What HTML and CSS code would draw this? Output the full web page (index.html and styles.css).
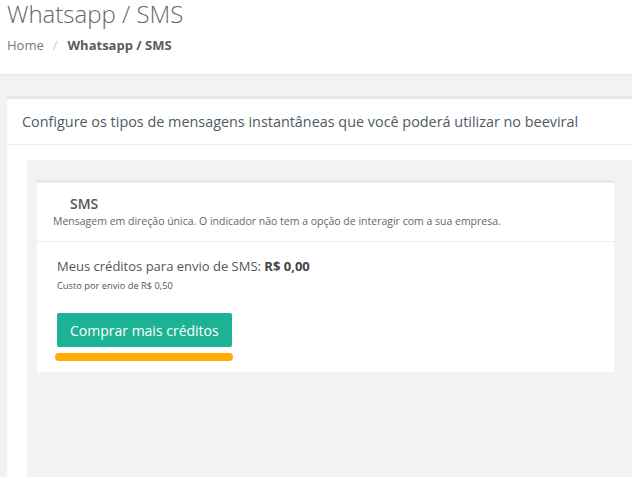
FILE: index.html
```html
<!DOCTYPE html>
<html lang="pt-BR">
<head>
<meta charset="utf-8">
<title>Whatsapp / SMS</title>
<link rel="stylesheet" href="styles.css">
</head>
<body>
<header class="page-head">
  <h1 class="page-title">Whatsapp / SMS</h1>
  <ul class="breadcrumb">
    <li class="crumb">Home</li>
    <li class="crumb-sep">/</li>
    <li class="crumb crumb-active">Whatsapp / SMS</li>
  </ul>
</header>
<main class="content">
  <section class="portlet">
    <div class="portlet-title">Configure os tipos de mensagens instantâneas que você poderá utilizar no beeviral</div>
    <div class="portlet-body">
      <div class="well">
        <div class="card">
          <div class="card-head">
            <h3 class="card-title">SMS</h3>
            <p class="card-desc">Mensagem em direção única. O indicador não tem a opção de interagir com a sua empresa.</p>
          </div>
          <div class="card-body">
            <p class="credits">Meus créditos para envio de SMS: <strong>R$ 0,00</strong></p>
            <p class="cost">Custo por envio de R$ 0,50</p>
            <button class="btn-buy" type="button">Comprar mais créditos</button>
            <div class="highlight"></div>
          </div>
        </div>
      </div>
    </div>
  </section>
</main>
</body>
</html>
```
FILE: styles.css
```css
html, body {
  margin: 0;
  padding: 0;
}
body {
  background: #f2f2f2;
  font-family: "Open Sans", "Noto Sans", sans-serif;
  overflow: hidden;
  width: 632px;
  height: 477px;
}
.page-head {
  background: #fff;
  height: 74px;
  border-bottom: 1px solid #e7e7e7;
  padding-left: 7px;
  overflow: hidden;
}
.page-title {
  margin: 2px 0 0;
  font-size: 24px;
  line-height: 24px;
  font-weight: 300;
  color: #666;
}
.breadcrumb {
  list-style: none;
  margin: 10px 0 0;
  padding: 0;
  display: flex;
  font-size: 13px;
  line-height: 18px;
  color: #777;
}
.crumb-sep {
  color: #ccc;
  margin: 0 10px 0 9px;
}
.crumb-active {
  font-weight: 700;
  color: #5b5b5b;
}
.content {
  padding: 21px 0 0 7px;
}
.portlet {
  background: #fff;
  border-top: 3px solid #e6e9ec;
  width: 720px;
  height: 400px;
}
.portlet-title {
  height: 45px;
  line-height: 45px;
  padding-left: 15px;
  font-size: 14.4px;
  color: #4e5a65;
  border-bottom: 1px solid #eee;
}
.portlet-body {
  padding: 15px 0 0 20px;
}
.well {
  background: #f2f2f2;
  padding: 20px 0 0 10px;
  height: 340px;
}
.card {
  width: 577px;
  background: #fff;
  border-top: 3px solid #e6e9ec;
}
.card-head {
  padding: 11px 0 12px 16px;
  border-bottom: 1px solid #eee;
}
.card-title {
  margin: 0 0 0 17px;
  font-size: 14px;
  line-height: 20px;
  font-weight: 600;
  color: #555;
}
.card-desc {
  margin: 0;
  font-size: 10.5px;
  line-height: 15px;
  color: #666;
}
.card-body {
  padding: 15px 0 11px 20px;
}
.credits {
  margin: 0;
  font-size: 13px;
  line-height: 18px;
  color: #555;
}
.credits strong {
  color: #444;
  font-weight: 700;
}
.cost {
  margin: 4px 0 0;
  font-size: 9.3px;
  line-height: 13px;
  color: #555;
}
.btn-buy {
  margin-top: 21px;
  height: 34px;
  padding: 0 13px;
  border: 0;
  border-radius: 2px;
  background: #1bb394;
  color: #fff;
  font-family: "Open Sans", "Noto Sans", sans-serif;
  font-size: 14px;
  display: block;
}
.highlight {
  margin: 6px 0 0 -2px;
  width: 178px;
  height: 8px;
  border-radius: 4px;
  background: #ffab00;
}
```
